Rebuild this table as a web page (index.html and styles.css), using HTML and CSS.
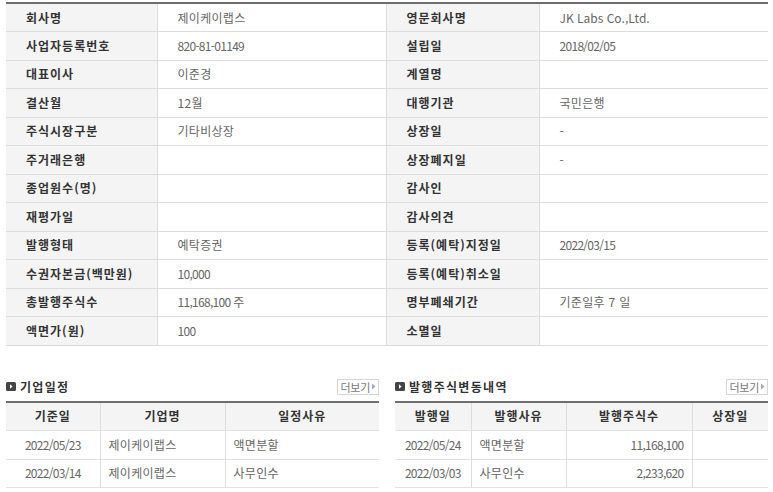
FILE: index.html
```html
<!DOCTYPE html>
<html lang="ko">
<head>
<meta charset="utf-8">
<link rel="stylesheet" href="styles.css">
</head>
<body>
<div class="page">
  <table class="info">
    <colgroup><col class="c1"><col class="c2"><col class="c3"><col class="c4"></colgroup>
    <tbody>
      <tr><th>회사명</th><td class="ko">제이케이랩스</td><th>영문회사명</th><td class="en">JK Labs Co.,Ltd.</td></tr>
      <tr><th>사업자등록번호</th><td>820-81-01149</td><th>설립일</th><td>2018/02/05</td></tr>
      <tr><th>대표이사</th><td class="ko">이준경</td><th>계열명</th><td></td></tr>
      <tr><th>결산월</th><td class="ko">12월</td><th>대행기관</th><td class="ko">국민은행</td></tr>
      <tr><th>주식시장구분</th><td class="ko">기타비상장</td><th>상장일</th><td>-</td></tr>
      <tr><th>주거래은행</th><td></td><th>상장폐지일</th><td>-</td></tr>
      <tr><th>종업원수(명)</th><td></td><th>감사인</th><td></td></tr>
      <tr><th>재평가일</th><td></td><th>감사의견</th><td></td></tr>
      <tr><th>발행형태</th><td class="ko">예탁증권</td><th>등록(예탁)지정일</th><td>2022/03/15</td></tr>
      <tr><th>수권자본금(백만원)</th><td>10,000</td><th>등록(예탁)취소일</th><td></td></tr>
      <tr><th>총발행주식수</th><td>11,168,100 주</td><th>명부폐쇄기간</th><td class="ko">기준일후 7 일</td></tr>
      <tr><th>액면가(원)</th><td>100</td><th>소멸일</th><td></td></tr>
    </tbody>
  </table>

  <div class="bottom">
    <section class="panel">
      <div class="panel-head">
        <h3 class="title"><span class="bullet"><svg width="10" height="9" viewBox="0 0 10 9"><rect x="0" y="0" width="10" height="9" rx="1.5" fill="#444"/><path d="M4 2.2 L6.6 4.5 L4 6.8 Z" fill="#fff"/></svg></span>기업일정</h3>
        <span class="more">더보기<svg width="5" height="7" viewBox="0 0 5 7"><path d="M1 0.5 L4.5 3.5 L1 6.5 Z" fill="#aaa"/></svg></span>
      </div>
      <table class="list">
        <colgroup><col class="s1"><col class="s2"><col class="s3"></colgroup>
        <thead><tr><th>기준일</th><th>기업명</th><th>일정사유</th></tr></thead>
        <tbody>
          <tr><td class="ctr">2022/05/23</td><td class="ko">제이케이랩스</td><td class="ko">액면분할</td></tr>
          <tr><td class="ctr">2022/03/14</td><td class="ko">제이케이랩스</td><td class="ko">사무인수</td></tr>
        </tbody>
      </table>
    </section>
    <section class="panel">
      <div class="panel-head">
        <h3 class="title"><span class="bullet"><svg width="10" height="9" viewBox="0 0 10 9"><rect x="0" y="0" width="10" height="9" rx="1.5" fill="#444"/><path d="M4 2.2 L6.6 4.5 L4 6.8 Z" fill="#fff"/></svg></span>발행주식변동내역</h3>
        <span class="more">더보기<svg width="5" height="7" viewBox="0 0 5 7"><path d="M1 0.5 L4.5 3.5 L1 6.5 Z" fill="#aaa"/></svg></span>
      </div>
      <table class="list">
        <colgroup><col class="i1"><col class="i2"><col class="i3"><col class="i4"></colgroup>
        <thead><tr><th>발행일</th><th>발행사유</th><th>발행주식수</th><th>상장일</th></tr></thead>
        <tbody>
          <tr><td class="ctr">2022/05/24</td><td class="ko">액면분할</td><td class="num">11,168,100</td><td></td></tr>
          <tr><td class="ctr">2022/03/03</td><td class="ko">사무인수</td><td class="num">2,233,620</td><td></td></tr>
        </tbody>
      </table>
    </section>
  </div>
</div>
</body>
</html>
```

FILE: styles.css
```css
* { box-sizing: border-box; }
html, body { margin: 0; padding: 0; background: #fff; }
body {
  font-family: "Noto Sans CJK KR", "Noto Sans", sans-serif;
  font-size: 12px;
  color: #666;
}
.page {
  width: 773px;
  padding: 2px 5px 0 6px;
}
table { border-collapse: collapse; table-layout: fixed; }

.info {
  width: 762px;
  border-top: 2px solid #6e6e6e;
}
.info col.c1 { width: 151px; }
.info col.c2 { width: 229px; }
.info col.c3 { width: 153px; }
.info col.c4 { width: 229px; }
.info th, .info td {
  height: 28.5px;
  padding: 0 0 0 20px;
  border-bottom: 1px solid #ddd;
  text-align: left;
  white-space: nowrap;
  line-height: 14px;
}
.info th {
  background: #f4f4f4;
  color: #333;
  font-weight: bold;
  font-size: 12px;
  letter-spacing: 1px;
}
.info td {
  font-size: 12px;
  color: #666;
  letter-spacing: -0.7px;
}
.info td { border-left: 1px solid #ddd; border-right: 1px solid #ddd; }
.info td:last-child { border-right: 0; }

.bottom {
  display: flex;
  gap: 16px;
  margin-top: 33px;
}
.panel { width: 373px; }
.panel-head {
  display: flex;
  justify-content: space-between;
  align-items: center;
  height: 16px;
  margin-bottom: 6px;
}
.title {
  margin: 0;
  display: flex;
  align-items: center;
  gap: 4px;
  font-size: 12px;
  font-weight: bold;
  color: #333;
  line-height: 14px;
  letter-spacing: 1.3px;
}
.bullet { display: flex; }
.more {
  display: flex;
  align-items: center;
  gap: 1px;
  height: 16px;
  padding: 0 2px 0 3px;
  border: 1px solid #d6d6d6;
  font-size: 11px;
  color: #777;
  line-height: 14px;
  letter-spacing: -0.3px;
}

.list {
  width: 373px;
  border-top: 2px solid #6e6e6e;
}
.list col.s1 { width: 94px; }
.list col.s2 { width: 125px; }
.list col.s3 { width: 154px; }
.list col.i1 { width: 76px; }
.list col.i2 { width: 95px; }
.list col.i3 { width: 126px; }
.list col.i4 { width: 76px; }
.list th, .list td {
  border-bottom: 1px solid #e2e2e2;
  border-left: 1px solid #ddd;
  white-space: nowrap;
  line-height: 14px;
}
.list th:first-child, .list td:first-child { border-left: 0; }
.list th {
  height: 29px;
  background: #f4f4f4;
  color: #333;
  font-weight: bold;
  font-size: 12px;
  text-align: center;
  letter-spacing: 1px;
}
.list td {
  height: 28.5px;
  padding: 0 8px;
  font-size: 12px;
  color: #666;
  text-align: left;
  letter-spacing: -0.7px;
}
.list td.ctr { text-align: center; padding: 0; }
.list td.num { text-align: right; }

td.ko { letter-spacing: 0.3px; }
td.en { letter-spacing: 0; }
```
